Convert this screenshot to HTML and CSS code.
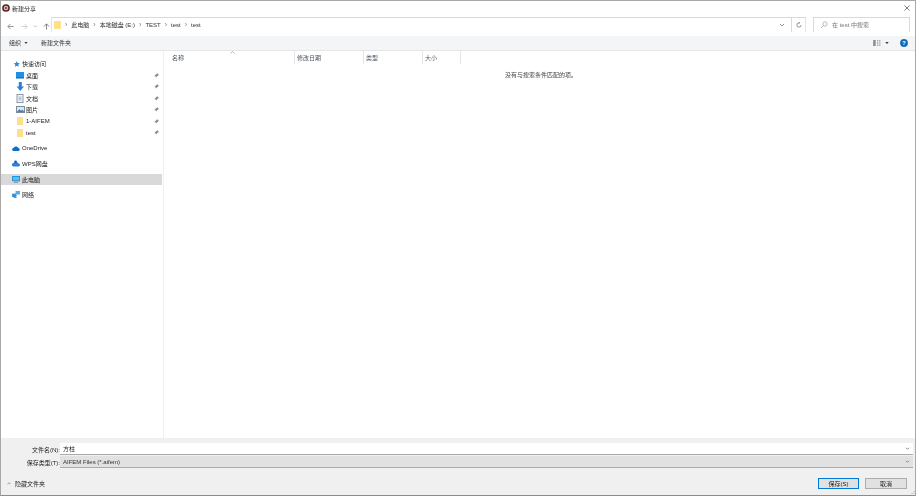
FILE: index.html
```html
<!DOCTYPE html>
<html lang="zh-CN">
<head>
<meta charset="utf-8">
<title>新建分享</title>
<link rel="stylesheet" href="styles.css">
</head>
<body>
<div class="window">
  <div class="titlebar">
    <svg class="app-icon" width="8" height="8" viewBox="0 0 10 10"><circle cx="5" cy="5" r="4.800" fill="#5c2327"/><circle cx="5" cy="5" r="2.800" fill="#d8c4c0"/><circle cx="5" cy="5" r="1.300" fill="#8a2020"/></svg>
    <span class="title">新建分享</span>
    <span class="spacer"></span>
    <svg class="close" width="6" height="6" viewBox="0 0 7 7"><path d="M.5.5l6 6M6.500.5l-6 6" stroke="#444" stroke-width=".8" fill="none"/></svg>
  </div>
  <div class="addressrow">
    <div class="navs">
      <svg width="7" height="7" viewBox="0 0 8 8"><path d="M7.500 4H1M4 1L1 4l3 3" stroke="#888" fill="none"/></svg>
      <svg width="7" height="7" viewBox="0 0 8 8"><path d="M.5 4H7M4 1l3 3-3 3" stroke="#ccc" fill="none"/></svg>
      <svg class="nav-down" width="5" height="7" viewBox="0 0 5 8"><path d="M1 3l1.500 1.500L4 3" stroke="#999" fill="none" stroke-width=".8"/></svg>
      <svg class="nav-up" width="7" height="7" viewBox="0 0 8 8"><path d="M4 7.500V1M1 4l3-3 3 3" stroke="#777" fill="none"/></svg>
    </div>
    <div class="address">
      <span class="crumb-folder"></span>
      <span class="sep">›</span><span>此电脑</span>
      <span class="sep">›</span><span>本地磁盘 (E:)</span>
      <span class="sep">›</span><span>TEST</span>
      <span class="sep">›</span><span>test</span>
      <span class="sep">›</span><span>test</span>
      <span class="spacer"></span>
      <svg class="addr-chev" width="6" height="4" viewBox="0 0 6 4"><path d="M1 1l2 2 2-2" stroke="#777" fill="none" stroke-width=".8"/></svg>
      <span class="addr-refresh"><svg width="6" height="6" viewBox="0 0 7 7"><path d="M3.500 1A2.500 2.500 0 1 0 6 3.500M3.200 0l1.300 1-1.300 1" stroke="#666" fill="none" stroke-width=".8"/></svg></span>
    </div>
    <div class="search">
      <svg width="8" height="8" viewBox="0 0 8 8"><circle cx="5" cy="3" r="2.200" stroke="#aaa" fill="none" stroke-width=".8"/><path d="M3.400 4.600L1 7" stroke="#aaa" stroke-width=".9"/></svg>
      <span>在 test 中搜索</span>
    </div>
  </div>
  <div class="toolbar">
    <span class="tool">组织<svg class="caret" width="4" height="2" viewBox="0 0 5 3"><path d="M0 0h5L2.500 3z" fill="#444"/></svg></span>
    <span class="tool new-folder">新建文件夹</span>
    <span class="spacer"></span>
    <svg class="view-icon" width="8" height="6" viewBox="0 0 9 7"><rect width="3" height="7" fill="#8a8f98"/><path d="M4.500 1H9M4.500 3.500H9M4.500 6H9" stroke="#666" stroke-dasharray="1.500 1"/></svg>
    <svg class="caret view-caret" width="4" height="2" viewBox="0 0 5 3"><path d="M0 0h5L2.500 3z" fill="#234"/></svg>
    <svg class="help" width="8" height="8" viewBox="0 0 9 9"><circle cx="4.500" cy="4.500" r="4.400" fill="#0f6cbd"/><text x="4.500" y="7" text-anchor="middle" font-size="6.500" font-weight="700" fill="#fff" font-family="Liberation Sans, sans-serif">?</text></svg>
  </div>
  <div class="main">
    <nav class="sidebar">
      <div class="nav-item top">
        <svg width="8" height="8" viewBox="-2 -1 10 10"><path d="M4 .3l1.100 2.500 2.700.2-2 1.800.6 2.700L4 6.100 1.600 7.500l.6-2.700-2-1.800 2.700-.2z" fill="#2f86d6"/></svg>
        <span>快速访问</span>
      </div>
      <div class="nav-item sub">
        <svg width="10" height="7" viewBox="0 0 10 7"><rect width="8" height="6" fill="#1e90e8"/><rect y="5.500" width="8" height="1" fill="#0b62a8"/></svg>
        <span>桌面</span><span class="spacer"></span><svg class="pin" width="5" height="5" viewBox="0 0 5 5"><path d="M3 0l2 2-1 .4-1.100 1.100-.2 1L1.500 3.300 0 5l1.300-1.700L.4 2.100l1-.2L2.600 1z" fill="#8b8b8b"/></svg>
      </div>
      <div class="nav-item sub">
        <svg width="10" height="9" viewBox="0 0 10 9"><path d="M2.800 0h3v4.500h2.200L4.300 9 .6 4.500h2.200z" fill="#2d7fd3"/></svg>
        <span>下载</span><span class="spacer"></span><svg class="pin" width="5" height="5" viewBox="0 0 5 5"><path d="M3 0l2 2-1 .4-1.100 1.100-.2 1L1.500 3.300 0 5l1.300-1.700L.4 2.100l1-.2L2.600 1z" fill="#8b8b8b"/></svg>
      </div>
      <div class="nav-item sub">
        <svg width="10" height="9" viewBox="0 0 10 9"><rect x="1" y=".5" width="6" height="8" fill="#f4f6f8" stroke="#8d99a6"/><path d="M2.500 3h3M2.500 4.500h3M2.500 6h3" stroke="#7aa0c4" stroke-width=".7"/></svg>
        <span>文档</span><span class="spacer"></span><svg class="pin" width="5" height="5" viewBox="0 0 5 5"><path d="M3 0l2 2-1 .4-1.100 1.100-.2 1L1.500 3.300 0 5l1.300-1.700L.4 2.100l1-.2L2.600 1z" fill="#8b8b8b"/></svg>
      </div>
      <div class="nav-item sub">
        <svg width="10" height="7" viewBox="0 0 10 7"><rect x=".5" y=".5" width="8" height="6" fill="#dbe7f2" stroke="#7d8b99"/><path d="M1 6l2.500-2.500L5 5l1.500-1L8 6" fill="#4a7fae" stroke="#4a7fae" stroke-width=".6"/></svg>
        <span>图片</span><span class="spacer"></span><svg class="pin" width="5" height="5" viewBox="0 0 5 5"><path d="M3 0l2 2-1 .4-1.100 1.100-.2 1L1.500 3.300 0 5l1.300-1.700L.4 2.100l1-.2L2.600 1z" fill="#8b8b8b"/></svg>
      </div>
      <div class="nav-item sub">
        <span class="folder"></span>
        <span>1-AIFEM</span><span class="spacer"></span><svg class="pin" width="5" height="5" viewBox="0 0 5 5"><path d="M3 0l2 2-1 .4-1.100 1.100-.2 1L1.500 3.300 0 5l1.300-1.700L.4 2.100l1-.2L2.600 1z" fill="#8b8b8b"/></svg>
      </div>
      <div class="nav-item sub">
        <span class="folder"></span>
        <span>test</span><span class="spacer"></span><svg class="pin" width="5" height="5" viewBox="0 0 5 5"><path d="M3 0l2 2-1 .4-1.100 1.100-.2 1L1.500 3.300 0 5l1.300-1.700L.4 2.100l1-.2L2.600 1z" fill="#8b8b8b"/></svg>
      </div>
      <div class="nav-item top group">
        <svg width="8" height="5" viewBox="0 0 9 6"><path d="M2 6a2 2 0 0 1-.2-4A3 3 0 0 1 7 2.200 1.900 1.900 0 0 1 7.100 6z" fill="#0f6fc6"/></svg>
        <span>OneDrive</span>
      </div>
      <div class="nav-item top group">
        <svg width="8" height="7" viewBox="0 0 9 7"><path d="M2 7a2 2 0 0 1-.2-4A3 3 0 0 1 7 3.200 1.900 1.900 0 0 1 7.100 7z" fill="#2c7fe0"/><circle cx="4" cy="1.500" r="1.500" fill="#1a5fb4"/></svg>
        <span>WPS网盘</span>
      </div>
      <div class="nav-item top group selected">
        <svg width="8" height="7" viewBox="0 0 9 8"><rect width="9" height="6" fill="#1f8ed8"/><rect x="1" y="1" width="7" height="4" fill="#5cc0f0"/><rect x="2" y="6.500" width="5" height="1.200" fill="#7a8a99"/></svg>
        <span>此电脑</span>
      </div>
      <div class="nav-item top group">
        <svg width="8" height="7" viewBox="0 0 9 8"><rect y="3" width="5" height="4" fill="#3b8ed0"/><rect x="4" y="0" width="5" height="4" fill="#5aa9e0"/><path d="M2 7.500h3" stroke="#6c7b88"/></svg>
        <span>网络</span>
      </div>
    </nav>
    <section class="files">
      <div class="sort-arrow"><svg width="5" height="3" viewBox="0 0 5 3"><path d="M.5 2.500L2.500.5l2 2" stroke="#999" fill="none" stroke-width=".7"/></svg></div>
      <div class="headers">
        <span class="col col-name">名称</span>
        <span class="col col-date">修改日期</span>
        <span class="col col-type">类型</span>
        <span class="col col-size">大小</span>
      </div>
      <p class="empty">没有与搜索条件匹配的项。</p>
    </section>
  </div>
  <div class="bottom">
    <div class="field-row">
      <label class="field-label">文件名(N):</label>
      <div class="input"><span>方柱</span><span class="spacer"></span><svg width="5" height="3" viewBox="0 0 6 4"><path d="M1 1l2 2 2-2" stroke="#666" fill="none"/></svg></div>
    </div>
    <div class="field-row">
      <label class="field-label">保存类型(T):</label>
      <div class="input type"><span>AIFEM Files (*.aifem)</span><span class="spacer"></span><svg width="5" height="3" viewBox="0 0 6 4"><path d="M1 1l2 2 2-2" stroke="#666" fill="none"/></svg></div>
    </div>
    <div class="actions">
      <svg width="4" height="3" viewBox="0 0 5 3"><path d="M.5 2.500L2.500.5l2 2" stroke="#555" fill="none" stroke-width=".7"/></svg>
      <span class="hide-folders">隐藏文件夹</span>
      <span class="spacer"></span>
      <button class="btn primary">保存(S)</button>
      <button class="btn">取消</button>
    </div>
    <svg class="grip" width="5" height="5" viewBox="0 0 5 5"><path d="M4 1v1M4 3v1M2 3v1" stroke="#aaa"/></svg>
  </div>
</div>
</body>
</html>
```

FILE: styles.css
```css
* { box-sizing: border-box; }
html, body { margin: 0; height: 100%; }
body { background: #fff; overflow: hidden; font-family: "Liberation Sans", "Noto Sans CJK SC", sans-serif; font-size: 6px; color: #222; }
svg { flex: none; display: block; }
.spacer { flex: 1; }
.window { width: 916px; height: 496px; display: flex; flex-direction: column; border: 1px solid #a8a8a8; border-bottom-color: #8c8c8c; background: #fff; filter: blur(.35px); }
.titlebar { height: 15px; display: flex; align-items: center; padding: 0 5px 1px 1px; }
.title { margin-left: 2px; color: #222; }
.addressrow { height: 20px; display: flex; padding-left: 5px; }
.navs { width: 45px; display: flex; align-items: center; gap: 7px; padding: 1px 0 0 1px; }
.nav-down, .nav-up { margin-left: -2px; }
.address { width: 755px; height: 15px; margin-top: 1px; border-top: 1px solid #d9d9d9; border-left: 1px solid #e4e4e4; display: flex; align-items: center; gap: 4px; padding: 0 0 1px 2px; color: #333; }
.crumb-folder { width: 7px; height: 8px; background: #fde08a; border-radius: 1px; }
.sep { color: #777; font-size: 7px; }
.addr-chev { margin-right: 2px; }
.addr-refresh { width: 15px; height: 14px; border-left: 1px solid #d9d9d9; border-right: 1px solid #e4e4e4; display: flex; align-items: center; justify-content: center; }
.search { width: 97px; height: 15px; margin-left: 7px; margin-top: 1px; border: 1px solid #d9d9d9; border-bottom: 0; display: flex; align-items: center; gap: 4px; padding: 0 0 1px 6px; color: #777; }
.toolbar { height: 15px; background: #f4f5f7; border-bottom: 1px solid #e6e6e6; display: flex; align-items: center; padding: 0 7px 1px 8px; color: #333; }
.tool { display: flex; align-items: center; gap: 3px; }
.new-folder { margin-left: 13px; }
.view-caret { margin: 0 11px 0 4px; }
.main { flex: 1; display: flex; min-height: 0; }
.sidebar { flex: none; width: 163px; padding-top: 7px; border-right: 1px solid #f0f0f0; }
.nav-item { height: 11.500px; display: flex; align-items: center; color: #222; }
.nav-item.top { padding-left: 11px; gap: 2px; }
.nav-item.sub { padding: 0 4px 0 15px; }
.nav-item.group { margin-top: 4px; }
.nav-item.selected { background: #d9d9d9; margin-right: 1px; }
.folder { width: 10px; height: 8px; border-left: 1px solid #fff; border-right: 3px solid #fff; background: #fde08a; }
.files { flex: 1; min-width: 0; position: relative; }
.sort-arrow { position: absolute; left: 66px; top: 0; }
.headers { height: 13px; display: flex; color: #4a5462; }
.col { height: 13px; padding: 2px 0 0 2px; border-right: 1px solid #e5e5e5; }
.col-name { width: 131px; padding-left: 8px; }
.col-date { width: 69px; }
.col-type { width: 59px; }
.col-size { width: 38px; }
.empty { margin: 6px 0 0 0; text-align: center; color: #444; padding-left: 3px; }
.bottom { height: 57px; background: #f0f0f0; padding-top: 5px; position: relative; }
.field-row { display: flex; height: 12px; align-items: center; }
.field-row + .field-row { margin-top: 1px; }
.field-label { width: 59px; text-align: right; color: #222; }
.input { flex: 1; height: 12px; margin-right: 2px; background: #fff; border-bottom: 1px solid #aaa; display: flex; align-items: center; padding: 0 3px; }
.input.type { background: #e1e1e1; color: #333; }
.actions { height: 11px; margin-top: 10px; display: flex; align-items: center; padding: 0 8px 0 6px; gap: 4px; }
.btn { height: 11px; width: 41px; padding: 0; margin: 0; border: 1px solid #adadad; background: #e1e1e1; font: inherit; color: #222; }
.btn + .btn { margin-left: 2px; width: 42px; }
.btn.primary { border-color: #0078d7; }
.grip { position: absolute; right: 0; bottom: 0; }
```
